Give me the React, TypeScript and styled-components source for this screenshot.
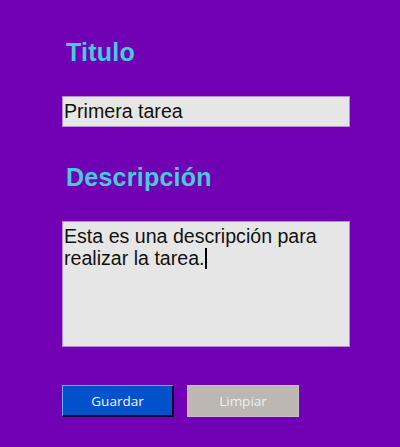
import React from "react";
import styled, { createGlobalStyle } from "styled-components";

const GlobalStyle = createGlobalStyle`
  html, body {
    margin: 0;
    padding: 0;
    background: #7100b4;
  }
  body {
    min-height: 100vh;
    font-family: "Liberation Sans", Arial, sans-serif;
  }
`;

const Page = styled.div`
  min-height: 447px;
  background: #7100b4;
  padding: 38px 0 0 62px;
  box-sizing: border-box;
`;

const Form = styled.form`
  display: flex;
  flex-direction: column;
  width: 288px;
`;

const Label = styled.h2<{ $gap: number }>`
  margin: 0 0 ${(p) => p.$gap}px 0;
  padding-left: 4px;
  font-family: "Liberation Sans", Arial, sans-serif;
  font-size: 25px;
  line-height: 28px;
  font-weight: 700;
  letter-spacing: 0.25px;
  color: #4cc8dc;
`;

const TextInput = styled.div`
  box-sizing: border-box;
  height: 31px;
  background: #e6e6e6;
  border: 1px solid #b48fd2;
  padding: 0 1px;
  font-family: "Liberation Sans", Arial, sans-serif;
  font-size: 19.6px;
  line-height: 29px;
  color: #111;
  margin-bottom: 36px;
`;

const TextArea = styled.div`
  box-sizing: border-box;
  height: 126px;
  background: #e6e6e6;
  border: 1px solid #b48fd2;
  padding: 3px 1px 0 1px;
  font-family: "Liberation Sans", Arial, sans-serif;
  font-size: 19.6px;
  line-height: 22px;
  color: #111;
  margin-bottom: 38px;
`;

const Caret = styled.span`
  display: inline-block;
  width: 2px;
  height: 21px;
  background: #000;
  vertical-align: -4px;
`;

const Actions = styled.div`
  display: flex;
  gap: 13px;
`;

const Button = styled.button<{ $primary?: boolean }>`
  box-sizing: border-box;
  width: 112px;
  height: 32px;
  padding: 0;
  font-family: "Open Sans", "DejaVu Sans", sans-serif;
  font-size: 13.5px;
  color: ${(p) => (p.$primary ? "#f4f6ff" : "#eeeeee")};
  background: ${(p) => (p.$primary ? "#0052cc" : "#bcb7b1")};
  border-style: solid;
  border-width: ${(p) => (p.$primary ? "1px 2px 2px 1px" : "1px")};
  border-color: ${(p) =>
    p.$primary
      ? "#79a6ff #0a0a30 #0a0a30 #79a6ff"
      : "#c6bfc8"};
  cursor: pointer;
`;

export default function App() {
  return (
    <>
      <GlobalStyle />
      <Page>
        <Form onSubmit={(e) => e.preventDefault()}>
          <Label $gap={30}>Titulo</Label>
          <TextInput role="textbox">Primera tarea</TextInput>
          <Label $gap={30}>Descripción</Label>
          <TextArea role="textbox">
            Esta es una descripción para realizar la tarea.
            <Caret />
          </TextArea>
          <Actions>
            <Button type="submit" $primary>
              Guardar
            </Button>
            <Button type="button">Limpiar</Button>
          </Actions>
        </Form>
      </Page>
    </>
  );
}
